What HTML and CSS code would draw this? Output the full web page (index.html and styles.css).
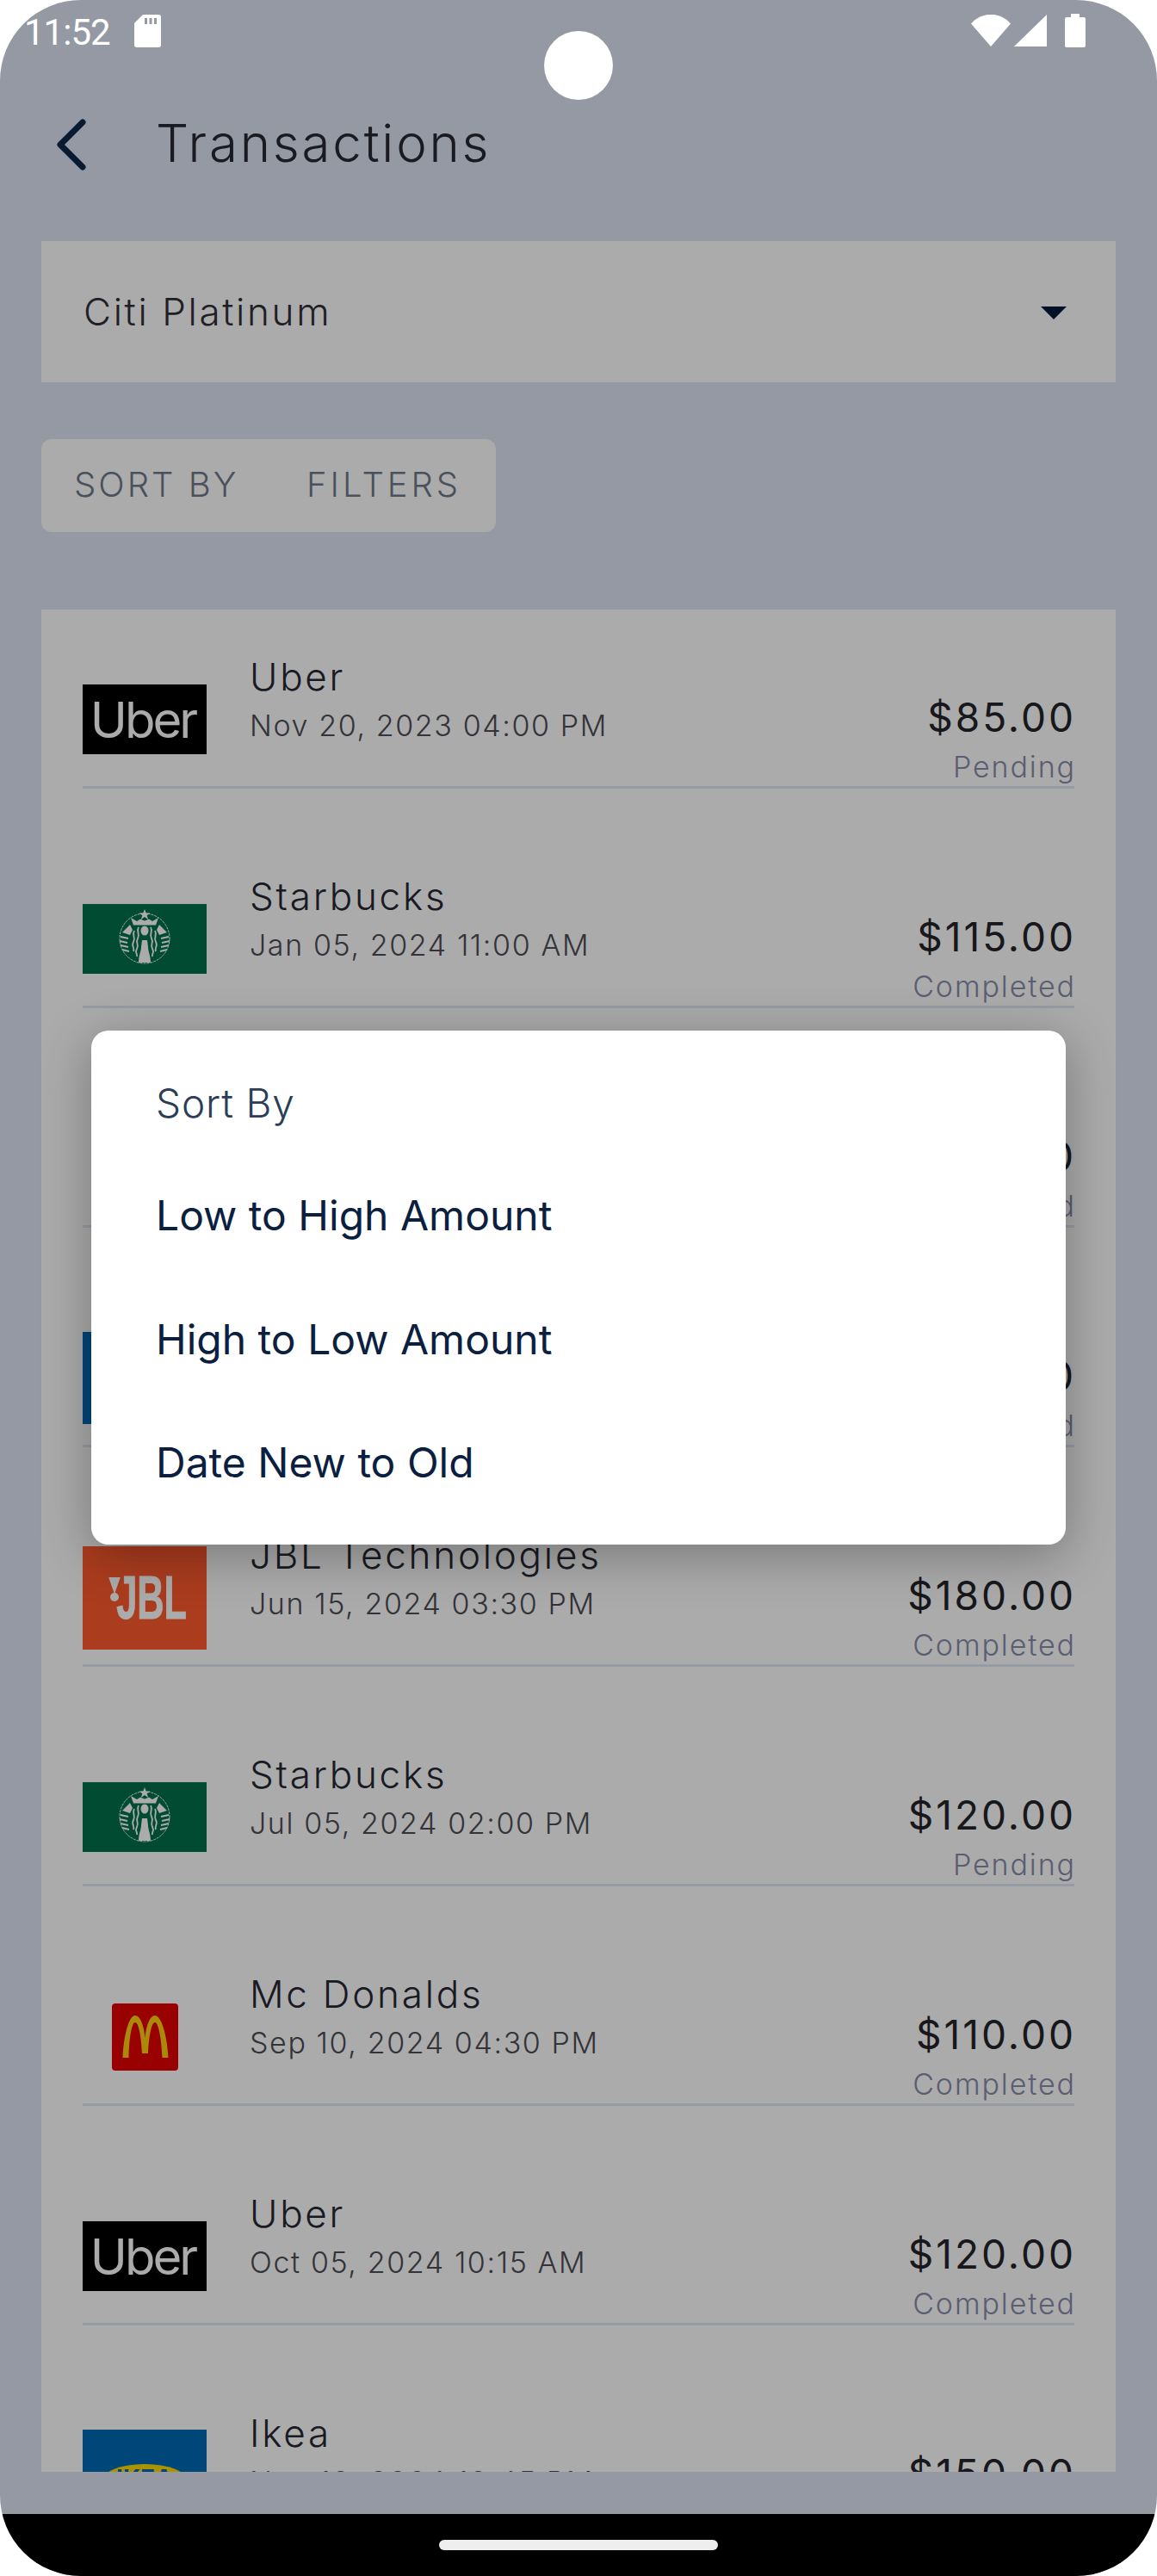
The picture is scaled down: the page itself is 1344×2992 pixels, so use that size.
FILE: index.html
```html
<!DOCTYPE html>
<html lang="en">
  <head>
    <meta charset="UTF-8" />
    <meta name="viewport" content="width=device-width, initial-scale=1" />
    <title>Transactions</title>
    <link rel="stylesheet" href="styles.css">
  </head>
  <body>
    <svg class="defs" width="0" height="0">
      <symbol id="siren" viewBox="0 0 144 81">
        <circle cx="72" cy="40" r="29" fill="#00704a" stroke="#fff" stroke-width="1" stroke-dasharray="3 1"/>
        <path d="M72 6l1.800 4.500h4.700l-3.800 2.800 1.500 4.700-4.200-2.900-4.200 2.900 1.500-4.700-3.800-2.800h4.700z" fill="#fff"/>
        <path d="M56 16l7 4 4-2.500 5 2 5-2 4 2.500 7-4-3 8.500H59z" fill="#fff"/>
        <path d="M55 24l-9 9 9 3 3-6zM89 24l9 9-9 3-3-6z" fill="#fff"/>
        <ellipse cx="72" cy="31" rx="4.500" ry="5.500" fill="#fff"/>
        <path d="M65 27c-3 5 2 8-1 13s2 7-1 12 1 5 0 9M60 31c-3 5 2 8-1 13s2 7 0 11M79 27c3 5-2 8 1 13s-2 7 1 12-1 5 0 9M84 31c3 5-2 8 1 13s-2 7 0 11" fill="none" stroke="#fff" stroke-width="1.800"/>
        <path d="M69 42h6l1 8c0 5 3 10 3 18H65c0-8 3-13 3-18z" fill="#fff"/>
        <path d="M44 38l9 2M43 43l9 2M44 48l9 2M46 53l8 2M100 38l-9 2M101 43l-9 2M100 48l-9 2M98 53l-8 2" stroke="#fff" stroke-width="2"/>
      </symbol>
      <symbol id="arches" viewBox="0 0 77 78">
        <path d="M12.500 63C14 35 20 14 27 14c6 0 10 11 11.500 26C40 25 44 14 50 14c7 0 14 21 15.500 49h-7C57.500 40 54 22 50 22c-4 0-7 16-8 36h-7c-1-20-4-36-8-36-4 0-7 18-7.500 41z" fill="#ffcc10"/>
      </symbol>
    </svg>

    <div class="screen">
      <div class="statusbar">
        <div class="status-left">
          <span class="time">11:52</span>
          <svg class="sd" viewBox="0 0 31 38">
            <path d="M10 0h18a3 3 0 0 1 3 3v32a3 3 0 0 1-3 3H3a3 3 0 0 1-3-3V10z" fill="#fff"/>
            <path d="M12 4h3v7h-3zM17.500 4h3v7h-3zM23 4h3v7h-3z" fill="#9599a4"/>
          </svg>
        </div>
        <div class="status-right">
          <svg class="wifi" viewBox="0 0 46 37"><path d="M0 10.500A30 30 0 0 1 46 10.500L23 37z" fill="#fff"/></svg>
          <svg class="signal" viewBox="0 0 38 37"><path d="M38 0v37H0z" fill="#fff"/></svg>
          <svg class="battery" viewBox="0 0 24 39"><path d="M7 0h10v4h5a2 2 0 0 1 2 2v31a2 2 0 0 1-2 2H2a2 2 0 0 1-2-2V6a2 2 0 0 1 2-2h5z" fill="#fff"/></svg>
        </div>
      </div>

      <header class="topbar">
        <svg class="back" viewBox="0 0 36 60"><path d="M30 4L4 30l26 26" fill="none" stroke="#0f2748" stroke-width="7" stroke-linecap="round" stroke-linejoin="round"/></svg>
        <h1 class="page-title">Transactions</h1>
      </header>

      <div class="select">
        <span class="select-value">Citi Platinum</span>
        <svg class="select-arrow" viewBox="0 0 30 15"><path d="M0 0h30L15 15z" fill="#031a3d"/></svg>
      </div>

      <div class="chips">
        <span class="chip">SORT BY</span>
        <span class="chip chip-wide">FILTERS</span>
      </div>

      <div class="list">
        <div class="row">
          <div class="logo-box"><div class="logo logo-uber">Uber</div></div>
          <div class="info"><div class="name">Uber</div><div class="date">Nov 20, 2023 04:00 PM</div></div>
          <div class="money"><div class="amount">$85.00</div><div class="state">Pending</div></div>
        </div>
        <div class="row">
          <div class="logo-box"><div class="logo logo-sbux"><svg class="logo-svg"><use href="#siren"/></svg></div></div>
          <div class="info"><div class="name">Starbucks</div><div class="date">Jan 05, 2024 11:00 AM</div></div>
          <div class="money"><div class="amount">$115.00</div><div class="state">Completed</div></div>
        </div>
        <div class="row">
          <div class="logo-box"><div class="logo logo-mcd"><svg class="logo-svg"><use href="#arches"/></svg></div></div>
          <div class="info"><div class="name">Mc Donalds</div><div class="date">Feb 20, 2024 01:30 PM</div></div>
          <div class="money"><div class="amount">$90.00</div><div class="state">Completed</div></div>
        </div>
        <div class="row">
          <div class="logo-box"><div class="logo logo-ikea"><span class="ikea-oval"><span class="ikea-text">IKEA</span></span></div></div>
          <div class="info"><div class="name">Ikea</div><div class="date">Apr 10, 2024 09:45 AM</div></div>
          <div class="money"><div class="amount">$200.00</div><div class="state">Completed</div></div>
        </div>
        <div class="row">
          <div class="logo-box"><div class="logo logo-jbl"><span class="jbl-mark"></span><span class="jbl-dot"></span><span class="jbl-text">JBL</span></div></div>
          <div class="info"><div class="name">JBL Technologies</div><div class="date">Jun 15, 2024 03:30 PM</div></div>
          <div class="money"><div class="amount">$180.00</div><div class="state">Completed</div></div>
        </div>
        <div class="row">
          <div class="logo-box"><div class="logo logo-sbux"><svg class="logo-svg"><use href="#siren"/></svg></div></div>
          <div class="info"><div class="name">Starbucks</div><div class="date">Jul 05, 2024 02:00 PM</div></div>
          <div class="money"><div class="amount">$120.00</div><div class="state">Pending</div></div>
        </div>
        <div class="row">
          <div class="logo-box"><div class="logo logo-mcd"><svg class="logo-svg"><use href="#arches"/></svg></div></div>
          <div class="info"><div class="name">Mc Donalds</div><div class="date">Sep 10, 2024 04:30 PM</div></div>
          <div class="money"><div class="amount">$110.00</div><div class="state">Completed</div></div>
        </div>
        <div class="row">
          <div class="logo-box"><div class="logo logo-uber">Uber</div></div>
          <div class="info"><div class="name">Uber</div><div class="date">Oct 05, 2024 10:15 AM</div></div>
          <div class="money"><div class="amount">$120.00</div><div class="state">Completed</div></div>
        </div>
        <div class="row">
          <div class="logo-box"><div class="logo logo-ikea"><span class="ikea-oval"><span class="ikea-text">IKEA</span></span></div></div>
          <div class="info"><div class="name">Ikea</div><div class="date">Nov 18, 2024 12:45 PM</div></div>
          <div class="money"><div class="amount">$150.00</div><div class="state">Completed</div></div>
        </div>
      </div>

      <div class="navbar"><span class="home-pill"></span></div>

      <div class="scrim"></div>
      <div class="camera"></div>

      <div class="dialog">
        <div class="dialog-title">Sort By</div>
        <div class="dialog-item">Low to High Amount</div>
        <div class="dialog-item">High to Low Amount</div>
        <div class="dialog-item">Date New to Old</div>
      </div>
    </div>
  </body>
</html>
```

FILE: styles.css
```css
* {
  box-sizing: border-box;
}
html,
body {
  margin: 0;
  background: #fff;
}
.defs {
  position: absolute;
}
.screen {
  position: relative;
  width: 1344px;
  height: 2992px;
  display: flex;
  flex-direction: column;
  overflow: hidden;
  border-radius: 94px;
  background: #dee4f5;
  font-family: Inter, sans-serif;
}

/* status bar */
.statusbar {
  position: relative;
  z-index: 2;
  height: 126px;
  flex-shrink: 0;
  display: flex;
  justify-content: space-between;
  align-items: flex-start;
  padding: 16px 83px 0 28px;
}
.status-left,
.status-right {
  display: flex;
  align-items: flex-start;
}
.time {
  font-family: Roboto, sans-serif;
  font-size: 42px;
  line-height: 42px;
  letter-spacing: -1px;
  color: #fff;
  margin-top: 1px;
}
.sd {
  width: 31px;
  height: 38px;
  margin-left: 28px;
  margin-top: 1px;
}
.wifi {
  width: 46px;
  height: 37px;
  margin-top: 1px;
}
.signal {
  width: 38px;
  height: 37px;
  margin-left: 4px;
  margin-top: 1px;
}
.battery {
  width: 24px;
  height: 39px;
  margin-left: 21px;
}
.camera {
  position: absolute;
  z-index: 3;
  left: 632px;
  top: 36px;
  width: 80px;
  height: 80px;
  border-radius: 50%;
  background: #fff;
}

/* top bar */
.topbar {
  height: 80px;
  flex-shrink: 0;
  display: flex;
  align-items: center;
  padding-left: 66px;
}
.back {
  width: 36px;
  height: 60px;
  margin-top: 4px;
}
.page-title {
  margin: 0 0 0 79px;
  font-size: 60px;
  font-weight: 300;
  line-height: 80px;
  letter-spacing: 2.800px;
  color: #272733;
}

/* account select */
.select {
  margin: 74px 48px 0;
  height: 164px;
  flex-shrink: 0;
  display: flex;
  align-items: center;
  justify-content: space-between;
  padding: 0 57px 0 49px;
  background: #fff;
}
.select-value {
  font-size: 44px;
  font-weight: 300;
  letter-spacing: 2.650px;
  color: #2f2f38;
}
.select-arrow {
  width: 30px;
  height: 15px;
  margin-top: 2px;
}

/* sort and filter */
.chips {
  margin: 66px 0 0 48px;
  width: 528px;
  height: 108px;
  flex-shrink: 0;
  display: flex;
  align-items: center;
  justify-content: space-between;
  padding: 0 40px 4px 38px;
  background: #fff;
  border-radius: 12px;
}
.chip {
  font-size: 40px;
  font-weight: 300;
  letter-spacing: 3px;
  color: #6f7a89;
}
.chip-wide {
  letter-spacing: 3.900px;
}

/* transactions */
.list {
  margin: 90px 48px 0;
  height: 2163px;
  flex-shrink: 0;
  padding: 0 48px;
  background: #fff;
  overflow: hidden;
}
.row {
  height: 208px;
  margin-bottom: 47px;
  display: flex;
  align-items: flex-start;
  border-bottom: 3px solid #e0e7f5;
}
.logo-box {
  width: 144px;
  height: 121px;
  margin-top: 67px;
  flex-shrink: 0;
  display: flex;
  align-items: center;
  justify-content: center;
}
.logo {
  flex-shrink: 0;
  position: relative;
  display: flex;
  align-items: center;
  justify-content: center;
  overflow: hidden;
}
.logo-svg {
  width: 100%;
  height: 100%;
  display: block;
}
.logo-uber {
  width: 144px;
  height: 81px;
  padding-right: 4px;
  background: #000;
  color: #fff;
  font-size: 58px;
  letter-spacing: -3px;
}
.logo-sbux {
  width: 144px;
  height: 81px;
  background: #00704a;
}
.logo-mcd {
  width: 77px;
  height: 78px;
  background: #e40000;
  border-radius: 4px;
}
.logo-ikea {
  width: 144px;
  height: 107px;
  background: #0069b5;
}
.ikea-oval {
  width: 100px;
  height: 40px;
  margin-top: 13px;
  padding-bottom: 6px;
  border-radius: 50%;
  background: #ffdb00;
  display: flex;
  align-items: center;
  justify-content: center;
}
.ikea-text {
  font-size: 28px;
  font-weight: 700;
  color: #0069b5;
}
.logo-jbl {
  width: 144px;
  height: 120px;
  background: #ff5a2d;
  color: #fff;
}
.jbl-mark {
  position: absolute;
  left: 30px;
  top: 36px;
  width: 14px;
  height: 20px;
  background: #fff;
  clip-path: polygon(0 0, 100% 0, 50% 100%);
}
.jbl-dot {
  position: absolute;
  left: 32px;
  top: 54px;
  width: 10px;
  height: 10px;
  border-radius: 50%;
  background: #fff;
}
.jbl-text {
  font-family: "Liberation Sans", sans-serif;
  font-size: 70px;
  font-weight: 700;
  line-height: 70px;
  margin-left: 16px;
  transform: scaleX(0.62);
  -webkit-text-stroke: 1px #fff;
}
.info {
  margin: 52px 0 0 50px;
}
.name {
  font-size: 44px;
  font-weight: 300;
  line-height: 52px;
  letter-spacing: 2.750px;
  color: #272733;
  white-space: nowrap;
}
.date {
  margin-top: 11px;
  font-size: 34px;
  font-weight: 300;
  line-height: 40px;
  letter-spacing: 1.600px;
  color: #4d4d55;
  white-space: nowrap;
}
.money {
  margin: 98px -2px 0 auto;
  text-align: right;
}
.amount {
  font-size: 46px;
  line-height: 54px;
  letter-spacing: 3px;
  color: #24242a;
}
.state {
  margin-top: 11px;
  font-size: 34px;
  font-weight: 300;
  line-height: 40px;
  letter-spacing: 1.900px;
  color: #888ba8;
}

/* bottom nav */
.navbar {
  position: relative;
  z-index: 2;
  margin-top: 49px;
  height: 72px;
  flex-shrink: 0;
  background: #000;
  display: flex;
  justify-content: center;
  padding-top: 30px;
}
.home-pill {
  width: 324px;
  height: 12px;
  border-radius: 6px;
  background: #eee;
}

/* sort dialog */
.scrim {
  position: absolute;
  inset: 0;
  z-index: 1;
  background: rgba(0, 0, 0, 0.33);
}
.dialog {
  position: absolute;
  z-index: 4;
  left: 106px;
  top: 1197px;
  width: 1132px;
  height: 597px;
  padding: 0 75px;
  background: #fff;
  border-radius: 20px;
  box-shadow: 0 12px 60px rgba(0, 0, 0, 0.3);
}
.dialog-title {
  height: 143px;
  padding-top: 24px;
  display: flex;
  align-items: center;
  font-size: 46px;
  font-weight: 300;
  letter-spacing: 0.850px;
  color: #2b3d57;
}
.dialog-item {
  height: 143.500px;
  display: flex;
  align-items: center;
  font-size: 48px;
  color: #0b2040;
}
```
